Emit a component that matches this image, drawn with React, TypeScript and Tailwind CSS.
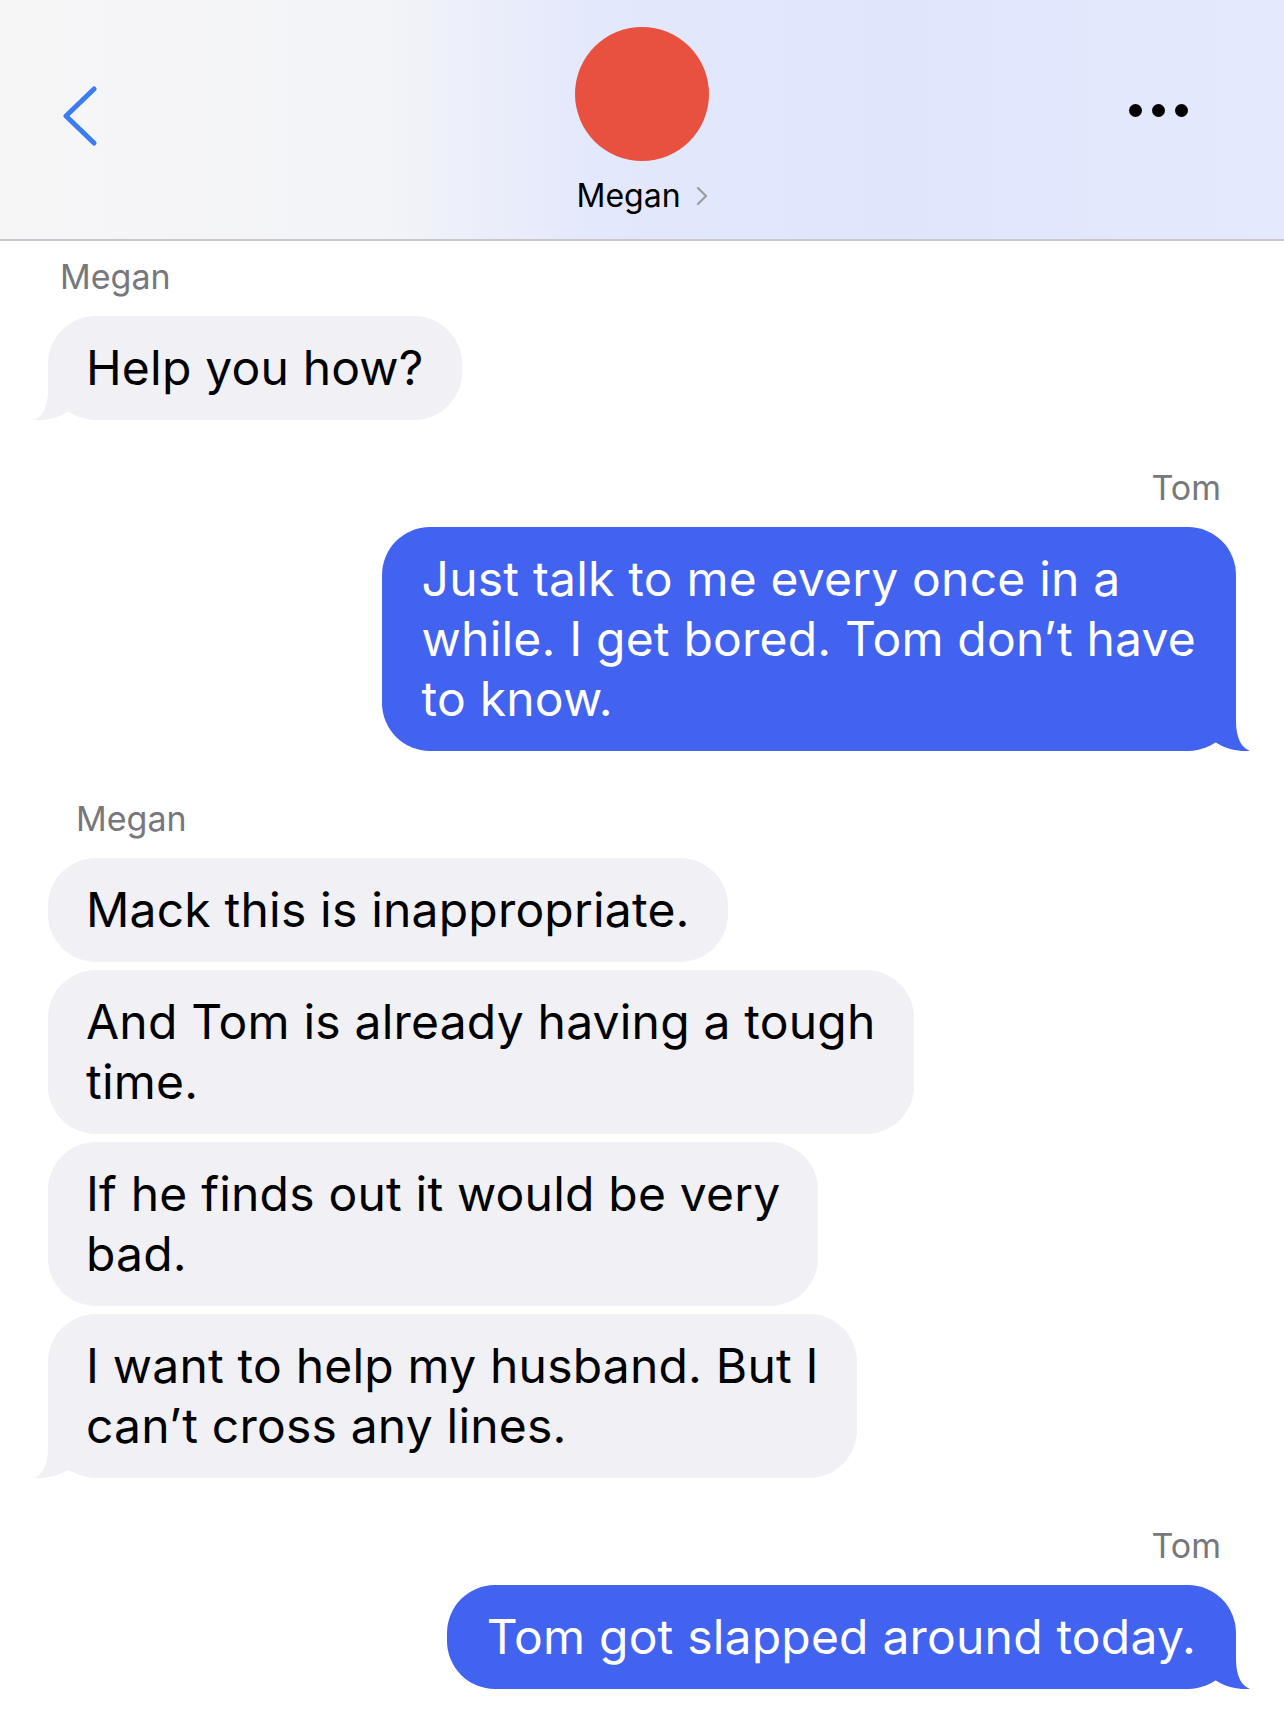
import React from "react";

const FONT = { fontFamily: "Inter, 'Liberation Sans', sans-serif" };

function Tail({ side, color }: { side: "left" | "right"; color: string }) {
  const path =
    "M40,0 L40,20 C40,38 46,47 54,50 C44,51 29,48 19,41 L19,0 Z";
  return (
    <svg
      width="54"
      height="50"
      viewBox="0 0 54 50"
      className={
        side === "right"
          ? "absolute bottom-0 right-[-14px]"
          : "absolute bottom-0 left-[-14px] -scale-x-100"
      }
    >
      <path d={path} fill={color} />
    </svg>
  );
}

function Bubble({
  lines,
  me,
  tail,
}: {
  lines: string[];
  me?: boolean;
  tail?: boolean;
}) {
  const color = me ? "#4262f0" : "#f0f0f5";
  return (
    <div
      className={
        me
          ? "relative self-end rounded-[48px] bg-[#4262f0] px-[40px] py-[22px] text-white"
          : "relative self-start rounded-[48px] bg-[#f0f0f5] px-[38px] py-[22px] text-black"
      }
    >
      <div className="relative z-10 whitespace-nowrap text-[48px] leading-[60px] tracking-[0.2px]">
        {lines.map((l, i) => (
          <div key={i}>{l}</div>
        ))}
      </div>
      {tail && <Tail side={me ? "right" : "left"} color={color} />}
    </div>
  );
}

export default function App() {
  return (
    <div className="min-h-[1723px] w-full bg-white" style={FONT}>
      <div className="grid h-[241px] grid-cols-[1fr_auto_1fr] border-b-2 border-[#c8c8cc] bg-[linear-gradient(90deg,#f6f6f7_0%,#f3f4f8_30%,#e3e8fc_46%,#dfe6fc_70%,#e5e9fd_100%)]">
        <div className="pl-[63px] pt-[86px]">
          <svg width="36" height="60" viewBox="0 0 36 60">
            <polyline
              points="31,3 3,30 31,57"
              fill="none"
              stroke="#3b7cf4"
              strokeWidth="5"
              strokeLinecap="round"
              strokeLinejoin="round"
            />
          </svg>
        </div>
        <div className="flex flex-col items-center pt-[27px]">
          <div className="h-[134px] w-[134px] rounded-full bg-[#e8513f]" />
          <div className="mt-[17px] flex items-center gap-[15px]">
            <span className="text-[32px] leading-[36px] text-black">Megan</span>
            <svg width="12" height="20" viewBox="0 0 12 20">
              <polyline
                points="2,2 10,10 2,18"
                fill="none"
                stroke="#9b9ba0"
                strokeWidth="2.2"
                strokeLinecap="round"
                strokeLinejoin="round"
              />
            </svg>
          </div>
        </div>
        <div className="flex justify-end gap-[10px] pr-[96px] pt-[104px]">
          <div className="h-[13px] w-[13px] rounded-full bg-black" />
          <div className="h-[13px] w-[13px] rounded-full bg-black" />
          <div className="h-[13px] w-[13px] rounded-full bg-black" />
        </div>
      </div>

      <div className="flex flex-col px-[48px]">
        <div className="mt-[18px] pl-[12px] text-[34px] leading-[36px] text-[#77777c]">
          Megan
        </div>
        <div className="mt-[21px] flex flex-col">
          <Bubble lines={["Help you how?"]} tail />
        </div>

        <div className="mt-[50px] self-end pr-[15px] text-[34px] leading-[36px] text-[#77777c]">
          Tom
        </div>
        <div className="mt-[21px] flex flex-col">
          <Bubble
            me
            tail
            lines={[
              "Just talk to me every once in a",
              "while. I get bored. Tom don\u2019t have",
              "to know.",
            ]}
          />
        </div>

        <div className="mt-[50px] pl-[28px] text-[34px] leading-[36px] text-[#77777c]">
          Megan
        </div>
        <div className="mt-[21px] flex flex-col gap-[8px]">
          <Bubble lines={["Mack this is inappropriate."]} />
          <Bubble lines={["And Tom is already having a tough", "time."]} />
          <Bubble lines={["If he finds out it would be very", "bad."]} />
          <Bubble
            tail
            lines={["I want to help my husband. But I", "can\u2019t cross any lines."]}
          />
        </div>

        <div className="mt-[50px] self-end pr-[15px] text-[34px] leading-[36px] text-[#77777c]">
          Tom
        </div>
        <div className="mt-[21px] flex flex-col">
          <Bubble me tail lines={["Tom got slapped around today."]} />
        </div>
      </div>
    </div>
  );
}
